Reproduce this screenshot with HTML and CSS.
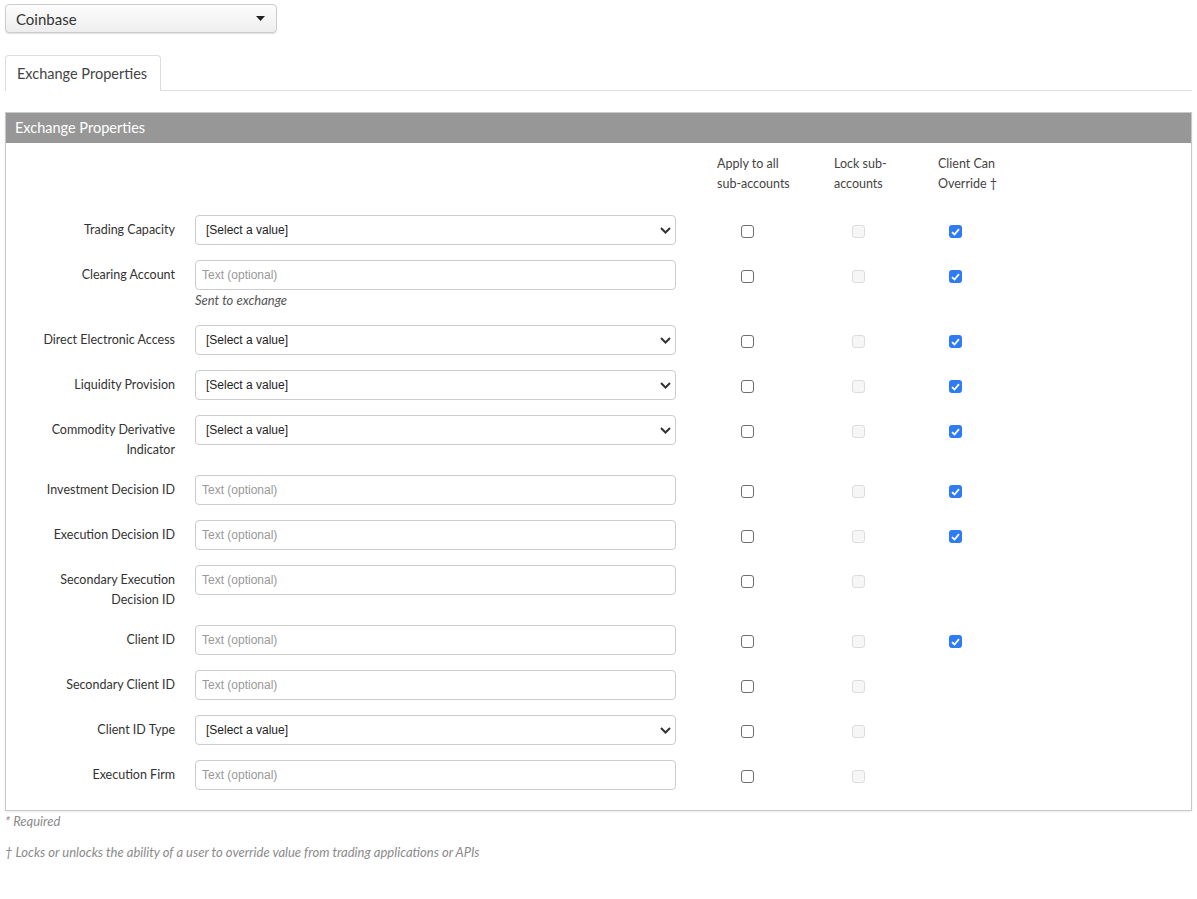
FILE: index.html
```html
<!DOCTYPE html>
<html>
<head>
  <meta charset="utf-8">
  <title>Exchange Properties</title>
  <link rel="stylesheet" href="styles.css">
</head>
<body>
  <div class="exchange-picker">
    <span>Coinbase</span>
    <svg width="9" height="5" viewBox="0 0 9 5"><path d="M0 0 H9 L4.5 5 Z" fill="#222"/></svg>
  </div>

  <div class="tabs">
    <div class="tab active">Exchange Properties</div>
    <div class="tab-fill"></div>
  </div>

  <div class="panel">
    <div class="panel-header">Exchange Properties</div>
    <div class="panel-body">
      <div class="row head-row">
        <div class="label"></div>
        <div class="field"></div>
        <div class="cell c1">Apply to all<br>sub-accounts</div>
        <div class="cell c2">Lock sub-<br>accounts</div>
        <div class="cell c3">Client Can<br>Override †</div>
      </div>

      <div class="row">
        <div class="label">Trading Capacity</div>
        <div class="field"><div class="select"><span>[Select a value]</span><svg width="11" height="7" viewBox="0 0 11 7"><path d="M1 1 L5.5 5.5 L10 1" fill="none" stroke="#333" stroke-width="2"/></svg></div></div>
        <div class="cell c1"><span class="check"></span></div>
        <div class="cell c2"><span class="check disabled"></span></div>
        <div class="cell c3"><span class="check checked"><svg width="9" height="8" viewBox="0 0 9 8"><path d="M1 4.2 L3.5 6.5 L8 1.2" fill="none" stroke="#fff" stroke-width="1.8"/></svg></span></div>
      </div>

      <div class="row">
        <div class="label">Clearing Account</div>
        <div class="field">
          <input class="text" type="text" placeholder="Text (optional)">
          <div class="hint">Sent to exchange</div>
        </div>
        <div class="cell c1"><span class="check"></span></div>
        <div class="cell c2"><span class="check disabled"></span></div>
        <div class="cell c3"><span class="check checked"><svg width="9" height="8" viewBox="0 0 9 8"><path d="M1 4.2 L3.5 6.5 L8 1.2" fill="none" stroke="#fff" stroke-width="1.8"/></svg></span></div>
      </div>

      <div class="row">
        <div class="label">Direct Electronic Access</div>
        <div class="field"><div class="select"><span>[Select a value]</span><svg width="11" height="7" viewBox="0 0 11 7"><path d="M1 1 L5.5 5.5 L10 1" fill="none" stroke="#333" stroke-width="2"/></svg></div></div>
        <div class="cell c1"><span class="check"></span></div>
        <div class="cell c2"><span class="check disabled"></span></div>
        <div class="cell c3"><span class="check checked"><svg width="9" height="8" viewBox="0 0 9 8"><path d="M1 4.2 L3.5 6.5 L8 1.2" fill="none" stroke="#fff" stroke-width="1.8"/></svg></span></div>
      </div>

      <div class="row">
        <div class="label">Liquidity Provision</div>
        <div class="field"><div class="select"><span>[Select a value]</span><svg width="11" height="7" viewBox="0 0 11 7"><path d="M1 1 L5.5 5.5 L10 1" fill="none" stroke="#333" stroke-width="2"/></svg></div></div>
        <div class="cell c1"><span class="check"></span></div>
        <div class="cell c2"><span class="check disabled"></span></div>
        <div class="cell c3"><span class="check checked"><svg width="9" height="8" viewBox="0 0 9 8"><path d="M1 4.2 L3.5 6.5 L8 1.2" fill="none" stroke="#fff" stroke-width="1.8"/></svg></span></div>
      </div>

      <div class="row">
        <div class="label">Commodity Derivative<br>Indicator</div>
        <div class="field"><div class="select"><span>[Select a value]</span><svg width="11" height="7" viewBox="0 0 11 7"><path d="M1 1 L5.5 5.5 L10 1" fill="none" stroke="#333" stroke-width="2"/></svg></div></div>
        <div class="cell c1"><span class="check"></span></div>
        <div class="cell c2"><span class="check disabled"></span></div>
        <div class="cell c3"><span class="check checked"><svg width="9" height="8" viewBox="0 0 9 8"><path d="M1 4.2 L3.5 6.5 L8 1.2" fill="none" stroke="#fff" stroke-width="1.8"/></svg></span></div>
      </div>

      <div class="row">
        <div class="label">Investment Decision ID</div>
        <div class="field"><input class="text" type="text" placeholder="Text (optional)"></div>
        <div class="cell c1"><span class="check"></span></div>
        <div class="cell c2"><span class="check disabled"></span></div>
        <div class="cell c3"><span class="check checked"><svg width="9" height="8" viewBox="0 0 9 8"><path d="M1 4.2 L3.5 6.5 L8 1.2" fill="none" stroke="#fff" stroke-width="1.8"/></svg></span></div>
      </div>

      <div class="row">
        <div class="label">Execution Decision ID</div>
        <div class="field"><input class="text" type="text" placeholder="Text (optional)"></div>
        <div class="cell c1"><span class="check"></span></div>
        <div class="cell c2"><span class="check disabled"></span></div>
        <div class="cell c3"><span class="check checked"><svg width="9" height="8" viewBox="0 0 9 8"><path d="M1 4.2 L3.5 6.5 L8 1.2" fill="none" stroke="#fff" stroke-width="1.8"/></svg></span></div>
      </div>

      <div class="row">
        <div class="label">Secondary Execution<br>Decision ID</div>
        <div class="field"><input class="text" type="text" placeholder="Text (optional)"></div>
        <div class="cell c1"><span class="check"></span></div>
        <div class="cell c2"><span class="check disabled"></span></div>
        <div class="cell c3"></div>
      </div>

      <div class="row">
        <div class="label">Client ID</div>
        <div class="field"><input class="text" type="text" placeholder="Text (optional)"></div>
        <div class="cell c1"><span class="check"></span></div>
        <div class="cell c2"><span class="check disabled"></span></div>
        <div class="cell c3"><span class="check checked"><svg width="9" height="8" viewBox="0 0 9 8"><path d="M1 4.2 L3.5 6.5 L8 1.2" fill="none" stroke="#fff" stroke-width="1.8"/></svg></span></div>
      </div>

      <div class="row">
        <div class="label">Secondary Client ID</div>
        <div class="field"><input class="text" type="text" placeholder="Text (optional)"></div>
        <div class="cell c1"><span class="check"></span></div>
        <div class="cell c2"><span class="check disabled"></span></div>
        <div class="cell c3"></div>
      </div>

      <div class="row">
        <div class="label">Client ID Type</div>
        <div class="field"><div class="select"><span>[Select a value]</span><svg width="11" height="7" viewBox="0 0 11 7"><path d="M1 1 L5.5 5.5 L10 1" fill="none" stroke="#333" stroke-width="2"/></svg></div></div>
        <div class="cell c1"><span class="check"></span></div>
        <div class="cell c2"><span class="check disabled"></span></div>
        <div class="cell c3"></div>
      </div>

      <div class="row">
        <div class="label">Execution Firm</div>
        <div class="field"><input class="text" type="text" placeholder="Text (optional)"></div>
        <div class="cell c1"><span class="check"></span></div>
        <div class="cell c2"><span class="check disabled"></span></div>
        <div class="cell c3"></div>
      </div>
    </div>
  </div>

  <div class="note">* Required</div>
  <div class="note second">† Locks or unlocks the ability of a user to override value from trading applications or APIs</div>
</body>
</html>
```

FILE: styles.css
```css
body {
  font-family: Lato, "Open Sans", sans-serif;
  color: #333;
  margin: 0;
  padding: 4px 5px 0 5px;
  background: #fff;
}
.exchange-picker {
  display: flex;
  align-items: center;
  justify-content: space-between;
  padding: 0 11px 0 10px;
  box-sizing: border-box;
  width: 272px;
  height: 29px;
  border: 1px solid #ccc;
  border-radius: 4px;
  background: linear-gradient(#fdfdfd, #eeeeee);
  box-shadow: 0 1px 1px rgba(0, 0, 0, 0.12);
  font-size: 15px;
  color: #333;
}
.tabs {
  display: flex;
  margin-top: 22px;
}
.tab {
  padding: 0 12px 0 11px;
  height: 36px;
  line-height: 35px;
  font-size: 14.5px;
  white-space: nowrap;
  color: #444;
  border: 1px solid #ddd;
  border-bottom: none;
  border-radius: 4px 4px 0 0;
  box-sizing: border-box;
  width: 156px;
}
.tab-fill {
  flex: 1;
  border-bottom: 1px solid #ddd;
}
.panel {
  margin-top: 21px;
  border: 1px solid #c8c8c8;
  box-shadow: 0 1px 2px rgba(0, 0, 0, 0.08);
}
.panel-header {
  background-color: #979797;
  color: #fff;
  height: 30px;
  line-height: 30px;
  padding-left: 9px;
  font-size: 14.5px;
}
.panel-body {
  padding: 11px 0 5px 0;
  font-size: 12.5px;
}
.row {
  display: flex;
  align-items: flex-start;
  margin-bottom: 15px;
}
.head-row {
  margin-bottom: 21px;
  line-height: 20px;
  color: #444;
}
.label {
  width: 169px;
  margin-right: 20px;
  padding-top: 5px;
  line-height: 20px;
  text-align: right;
  color: #333;
}
.head-row .label {
  padding-top: 0;
}
.field {
  width: 481px;
  margin-right: 41px;
}
.select, .text {
  box-sizing: border-box;
  width: 481px;
  height: 30px;
  border: 1px solid #ccc;
  border-radius: 4px;
  background: #fff;
  font-family: "Liberation Sans", Arial, sans-serif;
  font-size: 12px;
}
.select {
  display: flex;
  align-items: center;
  justify-content: space-between;
  padding: 0 4px 0 10px;
  color: #222;
}
.text {
  display: block;
  padding: 0 6px;
  color: #333;
  outline: none;
}
.text::placeholder {
  color: #999;
}
.hint {
  font-style: italic;
  font-size: 13px;
  line-height: 20px;
  color: #555;
}
.cell {
  display: flex;
  align-items: flex-start;
}
.head-row .cell {
  display: block;
}
.c1 { width: 117px; }
.c2 { width: 104px; }
.c3 { width: 110px; }
.check {
  display: flex;
  align-items: center;
  justify-content: center;
  box-sizing: border-box;
  width: 13px;
  height: 13px;
  margin-top: 10px;
  border: 1px solid #6f6f6f;
  border-radius: 3px;
  background: #fff;
}
.c1 .check { margin-left: 24px; }
.c2 .check { margin-left: 18px; }
.c3 .check { margin-left: 11px; }
.check.disabled {
  border-color: #ddd;
  background: #f6f6f6;
}
.check.checked {
  border: none;
  background: #2f7bf5;
}
.note {
  margin-top: 0;
  line-height: 20px;
  font-size: 13px;
  font-style: italic;
  color: #8a8a8a;
}
.note.second {
  margin-top: 11px;
}
```
